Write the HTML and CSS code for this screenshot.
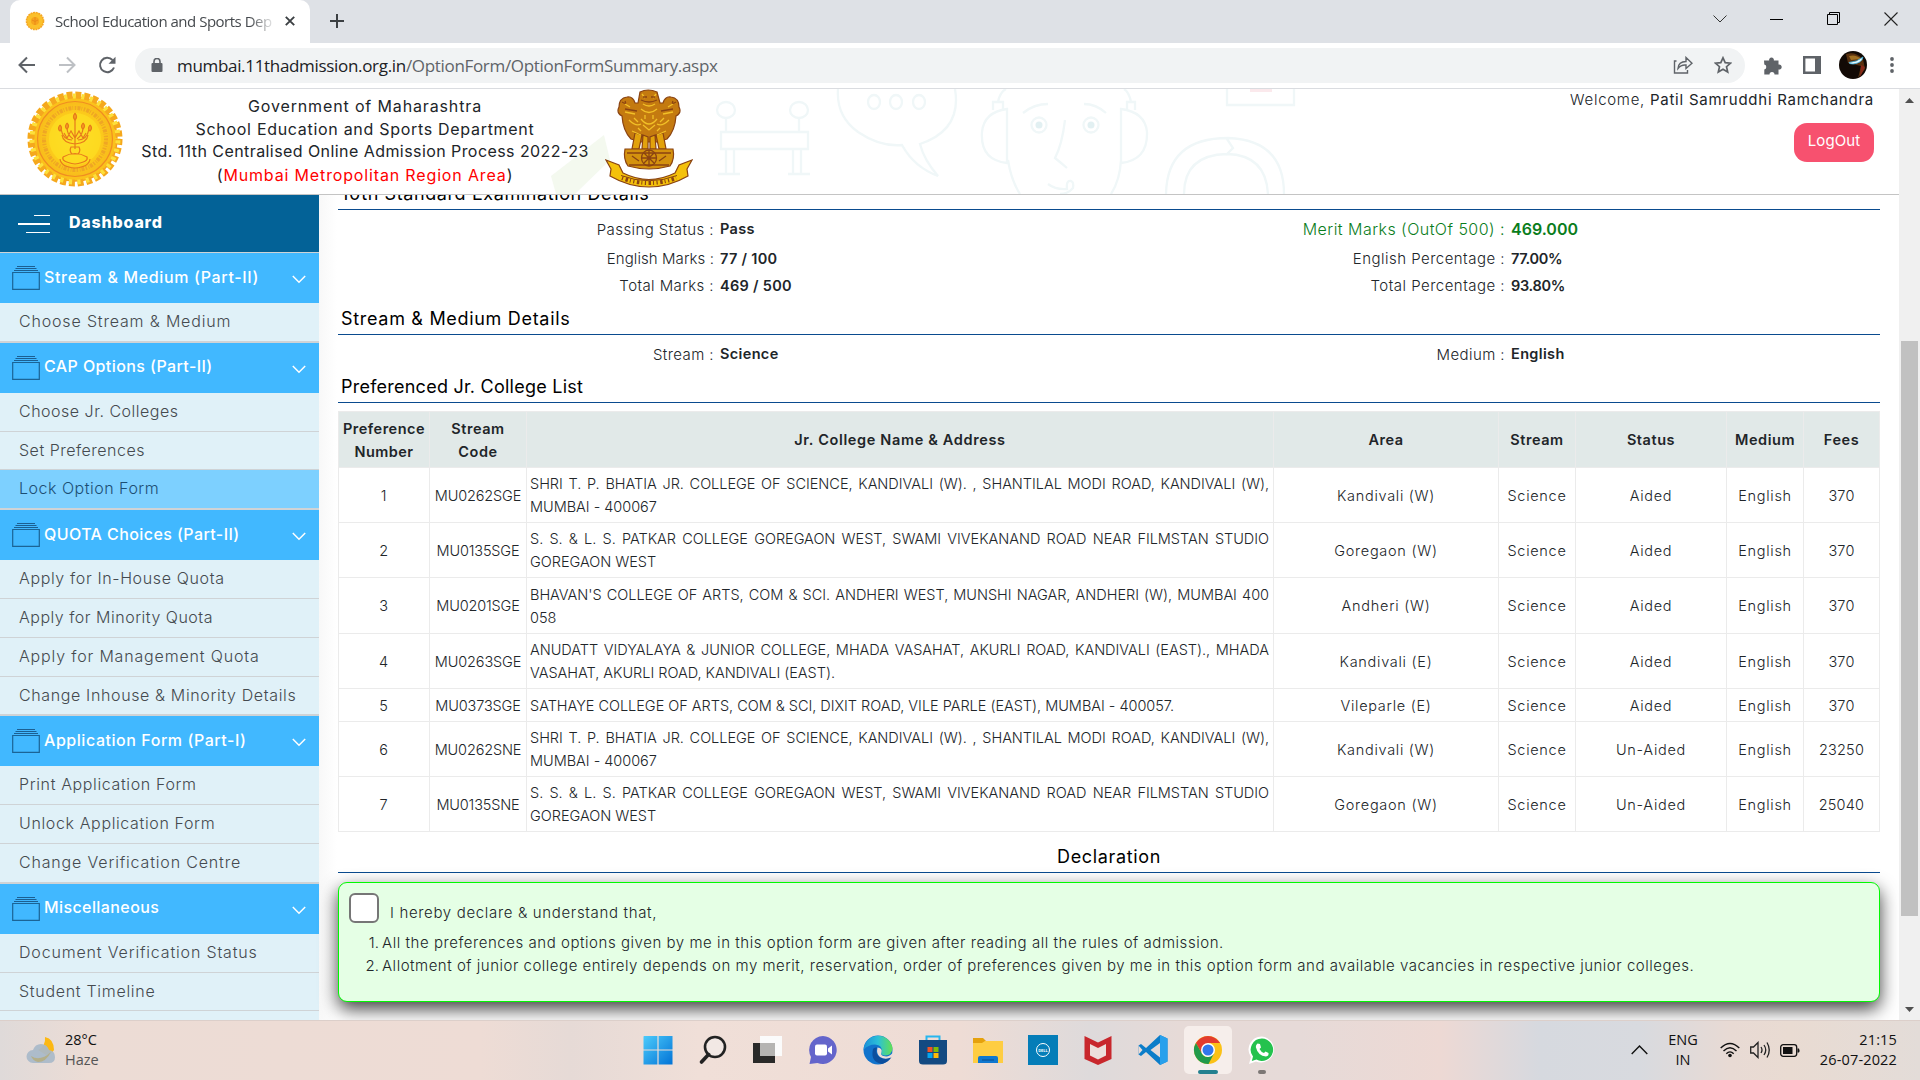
FILE: index.html
```html
<!DOCTYPE html>
<html lang="en">
<head>
<meta charset="utf-8">
<title>School Education and Sports Department</title>
<link rel="stylesheet" href="styles.css">
</head>
<body>
<svg class="defs" width="0" height="0">
  <defs>
    <symbol id="folder" viewBox="0 0 28 25"><path d="M5 1.500H23M3.500 3.500H24.500M2 5.500H26" stroke="#1b5f92" stroke-width="1" fill="none"/><path d="M.7 7.500H27.300V24.300H.7Z" fill="none" stroke="#1b6496" stroke-width="1.200"/></symbol>
    <symbol id="chev" viewBox="0 0 14 9"><path d="M.8 1L7 7.200L13.200 1" fill="none" stroke="#fff" stroke-width="1.500"/></symbol>
    <radialGradient id="gold"><stop offset="0" stop-color="#ffe83a"/><stop offset=".6" stop-color="#fdd01b"/><stop offset="1" stop-color="#f8bb1b"/></radialGradient>
    <symbol id="seal" viewBox="0 0 96 96">
      <circle cx="48" cy="48" r="42" fill="#fbc11b" stroke="#f3a01e" stroke-width="1.500"/>
      <circle cx="48" cy="48" r="44" fill="none" stroke="#f5a81d" stroke-width="7" stroke-dasharray="5.800 2.840"/>
      <circle cx="48" cy="48" r="43" fill="none" stroke="#fde03a" stroke-width="5" stroke-dasharray="3.200 5.440" stroke-dashoffset="-1.300"/>
      <circle cx="48" cy="48" r="37.500" fill="url(#gold)" stroke="#f08c22" stroke-width="1.200"/>
      <circle cx="48" cy="48" r="31" fill="none" stroke="#e9962a" stroke-width="4" stroke-dasharray="1.500 1.200 3 1 .8 1.600" opacity=".65"/>
      <circle cx="48" cy="48" r="26" fill="#fddc22" opacity=".8"/>
      <g fill="none" stroke="#e77a1c" stroke-width="1.200"><path d="M48 24V58M44 56Q42 60 45 63H51Q54 60 52 56ZM36 66Q48 59 60 66Q62 71 48 73Q34 71 36 66M33 68Q34 76 48 77Q62 76 63 68M45 49Q36 49 34 38M51 49Q60 49 62 38M46 48Q40 44 40 36M50 48Q56 44 56 36M35 44Q36 52 48 53Q60 52 61 44M37 42L40 47L44 40L48 47L52 40L56 47L59 42"/><path d="M48 22q-3 4 0 7q3-3 0-7M33 34q-3 4 0 6q3-3 0-6M40 32q-3 4 0 6q3-3 0-6M56 32q-3 4 0 6q3-3 0-6M63 34q-3 4 0 6q3-3 0-6" fill="#f6a01d"/></g>
    </symbol>
  </defs>
</svg>

<div class="tabbar">
  <div class="tab">
    <svg class="fav" viewBox="0 0 20 20"><circle cx="10" cy="10" r="8.500" fill="#fbc02a" stroke="#f5a623" stroke-width="1.600" stroke-dasharray="2 .7"/><circle cx="10" cy="10" r="4" fill="#f7a51d"/><path d="M10 6V14M7 9Q10 12 13 9" stroke="#ea8a1a" fill="none"/></svg>
    <span class="tab-title">School Education and Sports Dep</span>
    <svg class="x" viewBox="0 0 10 10"><path d="M.8.8L9.200 9.200M9.200.8L.8 9.200" stroke="#3c4043" stroke-width="1.900"/></svg>
  </div>
  <svg class="plus" viewBox="0 0 14 14"><path d="M7 0V14M0 7H14" stroke="#3c4043" stroke-width="2"/></svg>
  <div class="winctl">
    <svg width="14" height="8" viewBox="0 0 14 8"><path d="M.5.5L7 7L13.500.5" fill="none" stroke="#333"/></svg>
    <svg width="14" height="14" viewBox="0 0 14 14"><path d="M0 7.500H13" stroke="#000"/></svg>
    <svg width="14" height="14" viewBox="0 0 14 14"><path d="M.5 2.500H10.500V12.500H.5ZM2.500 2.500V.5H12.500V10.500H10.500" fill="none" stroke="#000"/></svg>
    <svg width="14" height="14" viewBox="0 0 14 14"><path d="M.5.5L13.500 13.500M13.500.5L.5 13.500" stroke="#222" stroke-width="1.100"/></svg>
  </div>
</div>

<div class="toolbar">
  <svg class="nav" viewBox="0 0 18 18"><path d="M17 9H2M9 1.500L1.500 9L9 16.500" fill="none" stroke="#5f6368" stroke-width="2"/></svg>
  <svg class="nav" viewBox="0 0 18 18"><path d="M1 9H16M9 1.500L16.500 9L9 16.500" fill="none" stroke="#bdc0c4" stroke-width="2"/></svg>
  <svg class="nav" viewBox="0 0 18 18"><path d="M16 11.500A7.200 7.200 0 1 1 14.500 4" fill="none" stroke="#5f6368" stroke-width="2"/><path d="M17.500.8V7.800H10.500Z" fill="#5f6368"/></svg>
  <div class="omnibox">
    <svg width="12" height="14" viewBox="0 0 12 14"><rect x=".5" y="5" width="11" height="9" rx="1" fill="#5f6368"/><path d="M3 6V3.500a3 3 0 0 1 6 0V6" fill="none" stroke="#5f6368" stroke-width="1.600"/></svg>
    <span class="url"><b>mumbai.11thadmission.org.in</b>/OptionForm/OptionFormSummary.aspx</span>
    <svg class="share" width="20" height="18" viewBox="0 0 20 18"><path d="M3.500 5H1.500V17H14.500V14M5 12.500Q5.500 5.500 13 5.500V1.500L19 7.300L13 12.500V9Q8 8.500 5 12.500Z" fill="none" stroke="#5f6368" stroke-width="1.400"/></svg>
    <svg width="18" height="18" viewBox="0 0 18 18"><path d="M9 1.800L11.200 6.700L16.500 7.200L12.500 10.700L13.700 16L9 13.200L4.300 16L5.500 10.700L1.500 7.200L6.800 6.700Z" fill="none" stroke="#5f6368" stroke-width="1.700"/></svg>
  </div>
  <svg class="ext" width="19" height="19" viewBox="0 0 19 19"><path d="M0 4.500H5.200A2.400 2.400 0 1 1 9.800 4.500H14.500V8.600A2.500 2.500 0 1 1 14.500 13.400V18.500H10.500A2.500 2.500 0 0 0 5.500 18.500H.3V13.500A2.500 2.500 0 0 0 .3 8.600Z" fill="#5f6368"/></svg>
  <svg class="panel" width="18" height="18" viewBox="0 0 18 18"><path d="M1.200 1.200H16.800V16.800H1.200Z" fill="#fff" stroke="#5f6368" stroke-width="2.400"/><rect x="12" y="1" width="5" height="16" fill="#5f6368"/></svg>
  <svg class="avatar" width="28" height="28" viewBox="0 0 28 28"><defs><clipPath id="av"><circle cx="14" cy="14" r="14"/></clipPath></defs><g clip-path="url(#av)"><rect width="28" height="28" fill="#120a05"/><path d="M7 3Q16 0 24 8L26 18L19 27L22 15L9 12Z" fill="#5a3210"/><path d="M10 5Q17 3 22 8L12 9Z" fill="#a17022"/><path d="M22 14L26 16L21 26Z" fill="#8a2818"/><path d="M10 11.500Q18 11 24 6Q23 12 14 13Q10 13 10 11.500Z" fill="#e8fbff" stroke="#3db6e6" stroke-width=".8"/></g></svg>
  <svg class="dots" width="4" height="16" viewBox="0 0 4 16"><g fill="#5f6368"><circle cx="2" cy="2" r="1.900"/><circle cx="2" cy="8" r="1.900"/><circle cx="2" cy="14" r="1.900"/></g></svg>
</div>

<div class="viewport">
  <div class="page">
    <header class="banner">
      <svg class="doodle" width="840" height="105" viewBox="550 89 840 105">
        <path d="M551 176L604 135L610 160L575 194H556Z" fill="#f4f9ef"/>
        <g fill="none" stroke="#f0f7f8" stroke-width="2.300">
          <ellipse cx="726" cy="110" rx="9" ry="8"/><ellipse cx="799" cy="110" rx="9" ry="8"/><path d="M726 118V132M799 118V132M721 132H808V149H721ZM726 149V173M734 149V173M793 149V173M801 149V173M718 174H740M788 174H810"/>
          <path d="M838 89Q836 116 858 132Q880 147 902 145Q914 167 938 176Q924 160 920 144Q962 130 955 89"/><ellipse cx="874" cy="102" rx="6" ry="7"/><ellipse cx="896" cy="102" rx="6" ry="7"/><ellipse cx="919" cy="102" rx="6" ry="7"/>
          <path d="M1007 163Q980 160 982 132Q984 112 1007 109ZM1121 163Q1148 160 1147 132Q1145 112 1121 109ZM993 110V102H1003V110M1127 110V102H1135V110M998 102Q1000 92 1006 89M1131 102Q1129 92 1124 89M1008 160Q1011 180 1020 194M1121 160Q1120 180 1111 194M1023 113Q1034 104 1048 104M1084 104Q1096 104 1106 113M1065 120Q1062 145 1055 158Q1060 162 1067 168M1048 184Q1056 190 1067 189Q1066 180 1071 181Q1074 182 1073 188Q1068 194 1060 194"/>
          <circle cx="1039" cy="125" r="7.500"/><circle cx="1091" cy="125" r="7.500"/>
          <path d="M1166 194Q1167 138 1228 138Q1284 140 1284 194M1184 194Q1184 155 1227 154Q1266 155 1268 194M1227 139L1233 148L1226 155M1227 89V105H1294V89"/>
        </g>
        <g fill="#e2f0f2"><circle cx="1039" cy="125" r="3.500"/><circle cx="1091" cy="125" r="3.500"/></g>
        <rect x="1250" y="89" width="22" height="3" fill="#fbe9ec"/>
      </svg>
      <svg class="seal"><use href="#seal"/></svg>
      <div class="titles">
        <div class="t1">Government of Maharashtra</div>
        <div class="t2">School Education and Sports Department</div>
        <div class="t3">Std. 11th Centralised Online Admission Process 2022-23</div>
        <div class="t4">(<span>Mumbai Metropolitan Region Area</span>)</div>
      </div>
      <svg class="lions" width="88" height="99" viewBox="0 0 88 99">
        <g stroke="#8a4312" stroke-width="1.200" fill="#e2a20c">
          <path d="M35 3Q43-1 52 3L55 14H58Q60 7 66 8Q74 9 74 18Q77 24 71 27Q70 42 62 50L52 53H36L26 50Q18 42 17 27Q11 24 14 18Q14 9 22 8Q28 7 30 14H33Z" fill="#c47a10"/>
          <path d="M30 44L27 60H34L37 46ZM58 44L61 60H54L51 46ZM38 46L37 60H43V48ZM50 46L51 60H45V48Z"/>
          <path d="M20 60H68Q70 70 65 77Q44 83 23 77Q18 70 20 60Z" fill="#d4920e"/>
          <path d="M1 71L14 76L18 84Q44 97 70 84L74 76L87 71L82 80L83 87Q64 98 44 98Q24 98 5 87L6 80Z" fill="#f4c10b"/>
        </g>
        <g fill="none" stroke="#f2c027" stroke-width="1.300"><path d="M37 5L40 9M51 5L48 9M38 15Q44 19 50 15M36 20Q44 27 52 20M20 15L25 18M68 15L63 18M20 23L30 25M68 23L58 25M24 31Q31 38 36 35M64 31Q57 38 52 35M36 30Q44 40 52 30M27 42L36 46M61 42L52 46M38 36L44 41L50 36M29 29L33 33M59 29L55 33M40 26V30M48 26V30M33 39L36 42M55 39L52 42"/></g>
        <g fill="none" stroke="#8a4312" stroke-width="1.300"><ellipse cx="44" cy="69" rx="7.500" ry="8"/><path d="M22 64H66M24 76H64M27 67L34 72M54 72L61 67M44 61V77M37 69H51M39 64L49 74M49 64L39 74M36 11Q44 15 52 11M20 20L32 22M68 20L56 22M17 13Q22 16 20 12M71 13Q66 16 68 12M38 8H42M46 8H50"/></g>
        <path d="M16 86.500Q44 97 72 86.500" fill="none" stroke="#8a4312" stroke-width="1"/>
        <path d="M17 89Q44 99 71 89" fill="none" stroke="#8a4312" stroke-width="4" stroke-dasharray="1.200 2.500 2.500 2 1 2.500"/>
      </svg>
      <div class="user">
        <div class="welcome">Welcome, <b>Patil Samruddhi Ramchandra</b></div>
        <div class="logout">LogOut</div>
      </div>
    </header>

    <div class="cols">
      <nav class="side">
        <div class="dash"><svg width="32" height="20" viewBox="0 0 32 20"><path d="M16 1.500H32M8 18.500H32" stroke="#fff"/><path d="M0 10H32" stroke="#fff" stroke-width="2"/></svg><span>Dashboard</span></div>
        <div class="grp"><div class="hd"><svg class="fo"><use href="#folder"/></svg><span>Stream &amp; Medium (Part-II)</span><svg class="ch"><use href="#chev"/></svg></div>
          <div class="it loose">Choose Stream &amp; Medium</div></div>
        <div class="grp"><div class="hd"><svg class="fo"><use href="#folder"/></svg><span class="tight">CAP Options (Part-II)</span><svg class="ch"><use href="#chev"/></svg></div>
          <div class="it tight">Choose Jr. Colleges</div><div class="it tight">Set Preferences</div><div class="it tight on">Lock Option Form</div></div>
        <div class="grp"><div class="hd"><svg class="fo"><use href="#folder"/></svg><span class="tight">QUOTA Choices (Part-II)</span><svg class="ch"><use href="#chev"/></svg></div>
          <div class="it">Apply for In-House Quota</div><div class="it tight">Apply for Minority Quota</div><div class="it loose">Apply for Management Quota</div><div class="it">Change Inhouse &amp; Minority Details</div></div>
        <div class="grp"><div class="hd"><svg class="fo"><use href="#folder"/></svg><span class="mid">Application Form (Part-I)</span><svg class="ch"><use href="#chev"/></svg></div>
          <div class="it">Print Application Form</div><div class="it">Unlock Application Form</div><div class="it loose">Change Verification Centre</div></div>
        <div class="grp"><div class="hd"><svg class="fo"><use href="#folder"/></svg><span class="tight">Miscellaneous</span><svg class="ch"><use href="#chev"/></svg></div>
          <div class="it loose">Document Verification Status</div><div class="it mid">Student Timeline</div><div class="it"></div></div>
      </nav>

      <main class="main">
        <h2 class="clipped">10th Standard Examination Details</h2>
        <div class="facts exam">
          <span>Passing Status :</span><b>Pass</b><span class="merit">Merit Marks (OutOf 500) :</span><b class="merit">469.000</b>
          <span class="tight">English Marks :</span><b class="sum">77 / 100</b><span class="lab">English Percentage :</span><b class="pct">77.00%</b>
          <span>Total Marks :</span><b class="sum">469 / 500</b><span class="lab">Total Percentage :</span><b class="pct">93.80%</b>
        </div>
        <h2 class="wide">Stream &amp; Medium Details</h2>
        <div class="facts stream"><span>Stream :</span><b>Science</b><span>Medium :</span><b>English</b></div>
        <h2>Preferenced Jr. College List</h2>
        <table>
          <colgroup><col class="c1"><col class="c2"><col class="c3"><col class="c4"><col class="c5"><col class="c6"><col class="c7"><col class="c8"></colgroup>
          <tr class="h56"><th>Preference Number</th><th>Stream Code</th><th>Jr. College Name &amp; Address</th><th>Area</th><th>Stream</th><th>Status</th><th>Medium</th><th>Fees</th></tr>
          <tr class="h55"><td>1</td><td>MU0262SGE</td><td>SHRI T. P. BHATIA JR. COLLEGE OF SCIENCE, KANDIVALI (W). , SHANTILAL MODI ROAD, KANDIVALI (W), MUMBAI - 400067</td><td>Kandivali (W)</td><td>Science</td><td>Aided</td><td>English</td><td>370</td></tr>
          <tr class="h55"><td>2</td><td>MU0135SGE</td><td>S. S. &amp; L. S. PATKAR COLLEGE GOREGAON WEST, SWAMI VIVEKANAND ROAD NEAR FILMSTAN STUDIO GOREGAON WEST</td><td>Goregaon (W)</td><td>Science</td><td>Aided</td><td>English</td><td>370</td></tr>
          <tr class="h56"><td>3</td><td>MU0201SGE</td><td>BHAVAN'S COLLEGE OF ARTS, COM &amp; SCI. ANDHERI WEST, MUNSHI NAGAR, ANDHERI (W), MUMBAI 400 058</td><td>Andheri (W)</td><td>Science</td><td>Aided</td><td>English</td><td>370</td></tr>
          <tr class="h55"><td>4</td><td>MU0263SGE</td><td>ANUDATT VIDYALAYA &amp; JUNIOR COLLEGE, MHADA VASAHAT, AKURLI ROAD, KANDIVALI (EAST)., MHADA VASAHAT, AKURLI ROAD, KANDIVALI (EAST).</td><td>Kandivali (E)</td><td>Science</td><td>Aided</td><td>English</td><td>370</td></tr>
          <tr class="h33"><td>5</td><td>MU0373SGE</td><td>SATHAYE COLLEGE OF ARTS, COM &amp; SCI, DIXIT ROAD, VILE PARLE (EAST), MUMBAI - 400057.</td><td>Vileparle (E)</td><td>Science</td><td>Aided</td><td>English</td><td>370</td></tr>
          <tr class="h55"><td>6</td><td>MU0262SNE</td><td>SHRI T. P. BHATIA JR. COLLEGE OF SCIENCE, KANDIVALI (W). , SHANTILAL MODI ROAD, KANDIVALI (W), MUMBAI - 400067</td><td>Kandivali (W)</td><td>Science</td><td>Un-Aided</td><td>English</td><td>23250</td></tr>
          <tr class="h55"><td>7</td><td>MU0135SNE</td><td>S. S. &amp; L. S. PATKAR COLLEGE GOREGAON WEST, SWAMI VIVEKANAND ROAD NEAR FILMSTAN STUDIO GOREGAON WEST</td><td>Goregaon (W)</td><td>Science</td><td>Un-Aided</td><td>English</td><td>25040</td></tr>
        </table>
        <h2 class="center">Declaration</h2>
        <section class="decl">
          <div class="agree"><i class="box"></i><span>I hereby declare &amp; understand that,</span></div>
          <div class="rule"><em>1.</em><span class="r1">All the preferences and options given by me in this option form are given after reading all the rules of admission.</span></div>
          <div class="rule"><em>2.</em><span>Allotment of junior college entirely depends on my merit, reservation, order of preferences given by me in this option form and available vacancies in respective junior colleges.</span></div>
        </section>
      </main>
    </div>
  </div>
  <div class="scroll">
    <svg width="9" height="5" viewBox="0 0 9 5"><path d="M0 5L4.500 0L9 5Z" fill="#505050"/></svg>
    <div class="thumb"></div>
    <svg class="down" width="9" height="5" viewBox="0 0 9 5"><path d="M0 0L4.500 5L9 0Z" fill="#505050"/></svg>
  </div>
</div>

<footer class="taskbar">
  <div class="weather">
    <svg width="30" height="28" viewBox="0 0 30 28"><path d="M19 1Q28 3 28 14Q26 18 20 19L12 14Q20 10 19 1Z" fill="#fcb813"/><path d="M7 27a6.500 6.500 0 0 1 0-13q2-6 8-6t8 6q6 1 6 7t-6 6Z" fill="#a9b9c9" opacity=".93"/><path d="M5 20Q14 26 25 16Q20 26 12 26Q7 25 5 20Z" fill="#b5ab78" opacity=".8"/></svg>
    <div><div>28°C</div><div class="dim">Haze</div></div>
  </div>
  <div class="apps">
    <svg viewBox="0 0 30 30"><defs><linearGradient id="w" x2="1" y2="1"><stop stop-color="#4ccbfb"/><stop offset="1" stop-color="#0273d6"/></linearGradient></defs><path d="M1 1H14.400V14.400H.5V1.500ZM15.600 1H29.500V14.400H15.600ZM.5 15.600H14.400V29.500H.5ZM15.600 15.600H29.500V29.500H15.600Z" fill="url(#w)"/></svg>
    <svg viewBox="0 0 30 30"><circle cx="17" cy="12" r="10" fill="#f2e8e4" stroke="#222" stroke-width="2.600"/><path d="M10.500 19.500L3.500 27" stroke="#222" stroke-width="3.600" stroke-linecap="round"/></svg>
    <svg viewBox="0 0 30 30"><rect x="0" y="8" width="22" height="20" fill="#2a2a29"/><rect x="7" y="1" width="22" height="20" fill="#fbfbfb"/><rect x="7" y="8" width="15" height="13" fill="#b5b4b2"/></svg>
    <svg viewBox="0 0 30 30"><path d="M15 1A14 14 0 1 1 9.500 28L1.500 29L3 22A14 14 0 0 1 15 1Z" fill="#6465cb"/><rect x="7" y="9.500" width="12" height="11" rx="2" fill="#fff"/><path d="M20 13.500L24 10.500V19.500L20 16.500Z" fill="#fff"/></svg>
    <svg viewBox="0 0 30 30"><defs><linearGradient id="e" x2="1"><stop stop-color="#1a8fd8"/><stop offset=".5" stop-color="#2cc0d8"/><stop offset="1" stop-color="#62e052"/></linearGradient></defs><circle cx="15" cy="15" r="14.500" fill="#1173cc"/><path d="M.6 15A14.500 14.500 0 0 1 29.500 13.500Q29 20 22 20.500Q17 20 18.500 17Q20 10 12 9.500Q5 9.500.6 15Z" fill="url(#e)"/><path d="M10 14Q7 27 19 29Q26 27 28.500 22Q22 25 16.500 22Q12 19 14 12.500Q11 12 10 14Z" fill="#0c4f9e"/><path d="M14.500 12.500Q19.500 13 18.500 17Q17 20 20.500 21Q26 22.500 29.500 18L30 22L28 22.500Q22 25 17 22Q13 19 14.500 12.500Z" fill="#ecdcd6"/></svg>
    <svg viewBox="0 0 30 30"><path d="M8.500 6V1.500H21.500V6" fill="none" stroke="#27b6ef" stroke-width="2"/><path d="M1 5H29V26Q29 29.500 25 29.500H5Q1 29.500 1 26Z" fill="#134a82"/><path d="M9.500 12H14.500V17H9.500Z" fill="#f35325"/><path d="M15.500 12H20.500V17H15.500Z" fill="#81bc06"/><path d="M9.500 18H14.500V23H9.500Z" fill="#05a6f0"/><path d="M15.500 18H20.500V23H15.500Z" fill="#ffba08"/></svg>
    <svg viewBox="0 0 30 30"><path d="M0 3H10L13 6V12H0Z" fill="#e5a10d"/><path d="M0 8H9L12 6H30V28H0Z" fill="#fecd42"/><path d="M5 28V23Q5 21 7 21H23Q25 21 25 23V28Z" fill="#0f78d0"/><path d="M9 25H21" stroke="#0a4d8c"/></svg>
    <svg viewBox="0 0 30 30"><rect width="30" height="30" fill="#047db8"/><circle cx="15" cy="15" r="6.500" fill="none" stroke="#fff"/><text x="15" y="17" text-anchor="middle" class="dell">DELL</text></svg>
    <svg viewBox="0 0 30 30"><path d="M1.500 1L15 7.500L28.500 1V24L15 30L1.500 24Z" fill="#c8272c"/><path d="M7 9L15 13L23 9V20.500L15 24.500L7 20.500Z" fill="#ecdfdb"/></svg>
    <svg viewBox="0 0 30 30"><path d="M22 0L29.500 3.500V26.500L22 30L8 17L3 21L.5 19.500V10.500L3 9L8 13ZM22 8L12.500 15L22 22.500Z" fill="#0b7dc9" fill-rule="evenodd"/><path d="M22 0L29.500 3.500V26.500L22 30Z" fill="#28a0ec"/><path d="M.5 10.500L4.500 15L.5 19.500Z" fill="#ecdcd6"/></svg>
    <div class="active"><svg viewBox="0 0 30 30"><circle cx="15" cy="15" r="14" fill="#fbc116"/><path d="M2.900 8A14 14 0 0 1 27.100 8H15L8.900 18.500Z" fill="#e33b2e"/><path d="M2.900 8L8.900 18.500Q11 22 15 22L21 18.500L15.500 29A14 14 0 0 1 2.900 8Z" fill="#219a4b"/><circle cx="15" cy="15" r="7" fill="#fff"/><circle cx="15" cy="15" r="5.500" fill="#3277ec"/></svg><i></i></div>
    <div class="open"><svg viewBox="0 0 30 30"><path d="M15 1.500A13 13 0 1 1 9 26.500L2 29L4 22A13 13 0 0 1 15 1.500Z" fill="#fff"/><path d="M15 3.500A11.200 11.200 0 1 1 9.500 24.500L4.800 26L6 21.500A11.200 11.200 0 0 1 15 3.500Z" fill="#24c24e"/><path d="M10.500 8.500L13 9L14 12.500L12.500 14Q14 17 17 18L18.500 16.500L21.500 18Q22 21 19 21.500Q11 21 8.800 12Q8.800 9.500 10.500 8.500Z" fill="#fff"/></svg><i></i></div>
  </div>
  <div class="tray">
    <svg width="17" height="10" viewBox="0 0 17 10"><path d="M.7 9L8.500 1L16.300 9" fill="none" stroke="#111" stroke-width="1.400"/></svg>
    <div class="lang"><div>ENG</div><div>IN</div></div>
    <svg class="wifi" width="20" height="16" viewBox="0 0 20 16"><g fill="none" stroke="#111" stroke-width="1.400"><path d="M.7 6Q10-3 19.300 6M3.500 9Q10 2.500 16.500 9M6.300 11.700Q10 8 13.700 11.700"/></g><circle cx="10" cy="13.500" r="1.800" fill="#111"/></svg>
    <svg class="vol" width="20" height="18" viewBox="0 0 20 18"><path d="M.7 6H3.500L8 1.500V16.500L3.500 12H.7ZM11 6Q13 9 11 12M14 4Q17.500 9 14 14M17 1.500Q21.500 9 17 16.500" fill="none" stroke="#222" stroke-width="1.300"/></svg>
    <svg class="bat" width="20" height="13" viewBox="0 0 20 13"><rect x=".7" y=".7" width="16" height="11.600" rx="2.500" fill="none" stroke="#111" stroke-width="1.300"/><rect x="3" y="3" width="9.500" height="7" fill="#111"/><path d="M17.500 4.500H19Q20 6.500 19 8.500H17.500Z" fill="#111"/></svg>
    <div class="clock"><div>21:15</div><div>26-07-2022</div></div>
  </div>
</footer>
</body>
</html>
```
FILE: styles.css
```css
* { box-sizing: border-box; }
body { margin: 0; width: 1920px; height: 1080px; overflow: hidden; background: #fff; font-family: Inter, "Open Sans", sans-serif; color: #212529; display: flex; flex-direction: column; }
svg { display: block; flex: none; }
.defs { position: absolute; }

/* browser chrome */
.tabbar { height: 43px; flex: none; background: #dee1e6; display: flex; align-items: center; padding-left: 10px; font-family: "Open Sans", sans-serif; }
.tab { width: 300px; height: 43px; background: #fff; border-radius: 10px 10px 0 0; display: flex; align-items: center; padding: 0 15px 2px; }
.fav { width: 20px; height: 20px; }
.tab-title { margin-left: 10px; width: 221px; overflow: hidden; white-space: nowrap; font-size: 15px; letter-spacing: -.49px; color: #45494d; -webkit-mask-image: linear-gradient(90deg, #000 88%, transparent 100%); mask-image: linear-gradient(90deg, #000 88%, transparent 100%); }
.x { width: 10px; height: 10px; margin-left: 9px; }
.plus { width: 14px; height: 14px; margin: -1px 0 0 20px; }
.winctl { margin-left: auto; display: flex; align-items: center; gap: 43px; padding-right: 22px; padding-bottom: 6px; }
.toolbar { height: 46px; flex: none; display: flex; align-items: center; background: #fff; border-bottom: 1px solid #dadce0; padding: 0 0 1px 18px; }
.nav { width: 18px; height: 18px; margin-right: 22px; }
.omnibox { width: 1610px; height: 35px; margin-left: -3px; border-radius: 18px; background: #f1f3f4; display: flex; align-items: center; padding: 0 13px 0 16px; font-family: "Open Sans", sans-serif; }
.url { margin-left: 14px; font-size: 17px; letter-spacing: -.32px; color: #5f6368; }
.url b { font-weight: 400; color: #202124; }
.share { margin-left: auto; margin-right: 21px; }
.ext { margin-left: 19px; }
.panel { margin-left: 20px; }
.avatar { margin-left: 18px; }
.dots { margin-left: 23px; }

/* page frame */
.viewport { height: 931px; flex: none; display: flex; }
.page { width: 1899px; height: 931px; overflow: hidden; }
.scroll { width: 21px; background: #f0f0f0; display: flex; flex-direction: column; align-items: center; padding: 9px 0 8px; }
.thumb { width: 17px; height: 575px; margin-top: 238px; background: #c1c1c1; }
.down { margin-top: auto; }

.banner { height: 106px; border-bottom: 1px solid #c4c4c4; display: flex; position: relative; }
.doodle { position: absolute; left: 550px; top: 0; }
.seal { width: 96px; height: 96px; margin: 2px 1px 0 27px; position: relative; }
.titles { width: 470px; margin-left: 6px; padding-top: 6px; text-align: center; white-space: nowrap; position: relative; font-size: 16px; line-height: 22.500px; }
.t1 { letter-spacing: .86px; }
.t2 { letter-spacing: .7px; line-height: 22px; }
.t3 { letter-spacing: .43px; line-height: 23px; }
.t4 { letter-spacing: .85px; line-height: 25px; }
.t4 span { color: #f00; }
.lions { margin-left: 5px; position: relative; }
.user { margin-left: auto; margin-right: 25px; display: flex; flex-direction: column; align-items: flex-end; }
.welcome { font-size: 15px; font-weight: 300; line-height: 22px; letter-spacing: .71px; }
.welcome b { font-weight: 400; letter-spacing: .76px; }
.logout { width: 80px; height: 39px; margin-top: 12px; border-radius: 13px; background: #f7516f; color: #fff; font-size: 15px; line-height: 36px; text-align: center; letter-spacing: .1px; }

.cols { display: flex; height: 825px; overflow: hidden; }
.side { width: 319px; height: 825px; overflow: hidden; flex: none; background: #e0f1f8; }
.dash { height: 57px; background: #036297; color: #fff; display: flex; align-items: center; padding: 1px 0 0 18px; font-size: 16px; font-weight: 800; letter-spacing: .8px; }
.dash span { margin: -5px 0 0 19px; }
.grp { border-top: 1px solid #cfd3d6; }
.hd { height: 50px; background: #41b8ff; color: #fff; display: flex; align-items: center; padding: 0 13px 0 12px; font-size: 16px; font-weight: 500; letter-spacing: .66px; }
.hd span { margin: -3px 0 0 4px; }
.hd span.tight { letter-spacing: .41px; }
.hd span.mid { letter-spacing: .55px; }
.fo { width: 28px; height: 25px; margin-top: -1px; }
.ch { width: 14px; height: 9px; margin: 3px 0 0 auto; }
.it { height: 38.800px; border-bottom: 1px solid #cfd3d6; padding-left: 19px; line-height: 36px; font-size: 16px; font-weight: 300; letter-spacing: .63px; color: #454a4f; white-space: nowrap; }
.it.tight { letter-spacing: .5px; }
.it.mid { letter-spacing: .7px; }
.it.loose { letter-spacing: .83px; }
.it.on { background: #7dd0ff; color: #1c4e74; }

/* content column */
.main { width: 1580px; padding: 0 19px; background: linear-gradient(90deg, #f8f8f8, #fff 18px); }
h2 { margin: 0; height: 33px; border-bottom: 1px solid #0a4b8f; padding-left: 3px; font-size: 18px; line-height: 33px; font-weight: 400; letter-spacing: .24px; color: #000; }
h2.clipped { margin-top: -18px; letter-spacing: .6px; }
h2.wide { letter-spacing: .69px; }
h2.center { margin-top: 8px; text-align: center; padding: 0; letter-spacing: .65px; }
.facts { display: grid; grid-template-columns: 376px 383px 396px 1fr; column-gap: 6px; align-items: center; font-size: 15px; font-weight: 300; letter-spacing: .42px; }
.facts span { text-align: right; }
.facts span.tight { letter-spacing: .08px; }
.facts span.lab { letter-spacing: .48px; }
.facts b { font-weight: 600; font-size: 14.500px; letter-spacing: .35px; padding-bottom: 1px; }
.facts b.sum { letter-spacing: .3px; }
.facts b.pct { letter-spacing: -.3px; }
.exam { height: 92px; padding-top: 4px; grid-template-rows: 30px 29px 25px; }
.stream { height: 35px; padding-top: 3px; }
.facts .merit { color: #0a7d1c; font-size: 16px; letter-spacing: .46px; }
.facts b.merit { letter-spacing: 0; }
table { width: 1541px; margin-top: 8px; border-collapse: collapse; table-layout: fixed; font-size: 14.500px; line-height: 23px; }
th, td { border: 1px solid #ebebeb; padding: 0 4px; text-align: center; vertical-align: middle; }
th { background: #e1e9e8; font-weight: 600; letter-spacing: .55px; }
th:nth-child(3) { letter-spacing: .65px; }
th:nth-child(7) { padding: 0; }
td { font-weight: 300; letter-spacing: .72px; }
th:first-child { padding: 0; letter-spacing: .48px; }
td:nth-child(2) { padding: 0; letter-spacing: -.15px; }
td:nth-child(3) { text-align: justify; letter-spacing: -.03px; padding: 0 4px 0 3px; }
td:last-child { letter-spacing: .2px; }
.c1 { width: 91px; } .c2 { width: 97px; } .c3 { width: 747px; } .c4 { width: 225px; }
.c5 { width: 77px; } .c6 { width: 151px; } .c7 { width: 77px; } .c8 { width: 76px; }
.h56 { height: 56px; } .h55 { height: 55px; } .h33 { height: 33px; }
.decl { height: 120px; margin-top: 9px; border: 1.500px solid #00fa00; border-radius: 9px; background: #e5ffe5; box-shadow: 0 7px 18px rgba(0, 0, 0, .75); padding: 10px 10px; font-size: 15px; font-weight: 300; }
.agree { display: flex; height: 38px; align-items: flex-start; letter-spacing: .66px; }
.box { width: 30px; height: 30px; border: 2.500px solid #767676; border-radius: 6px; background: #fff; margin-right: 11px; }
.agree span { line-height: 39px; }
.rule { display: flex; line-height: 23px; letter-spacing: .515px; white-space: nowrap; }
.r1 { letter-spacing: .545px; }
.rule em { font-style: normal; width: 30px; text-align: right; margin-right: 3px; letter-spacing: 0; }

/* taskbar */
.taskbar { height: 60px; flex: none; border-top: 1px solid #dccfca; display: flex; align-items: center; padding-bottom: 1px; font-family: "Open Sans", sans-serif; font-size: 14.500px; line-height: 20px; color: #111; background: linear-gradient(90deg, #dfdad9 0, #ecdcd5 90px, #eedcd5 480px, #e6dad6 570px, #f0dfd8 700px, #eedcd5 960px, #dedadb 1090px, #e6dad7 1180px, #e6dad8 1300px, #edd9d4 1440px, #d6d9df 1540px, #d8dadf 1640px, #e8dad4 1730px, #e9dbd2 1790px, #e3dcd8 1920px); }
.weather { width: 617px; display: flex; align-items: center; gap: 9px; padding-left: 26px; }
.weather .dim { color: #555; }
.apps { display: flex; align-items: center; width: 700px; padding-left: 25.500px; gap: 25px; }
.apps svg { width: 30px; height: 30px; }
.active { width: 48px; height: 48px; margin: 0 -9.500px 0 -9px; background: #f6eeeb; border-radius: 5px; display: flex; flex-direction: column; align-items: center; padding-top: 9px; gap: 5px; }
.active i { width: 20px; height: 4px; border-radius: 2px; background: #23808f; }
.open { display: flex; flex-direction: column; align-items: center; height: 48px; padding-top: 9px; gap: 5px; }
.open i { width: 8px; height: 4px; border-radius: 2px; background: #7d7775; }
.dell { font: 700 4px "Open Sans", sans-serif; fill: #fff; }
.tray { margin-left: auto; display: flex; align-items: center; padding-right: 23px; }
.lang { width: 40px; text-align: center; margin-left: 15px; }
.wifi { margin-left: 17px; }
.vol { margin-left: 10px; }
.bat { margin-left: 10px; }
.clock { width: 97px; text-align: right; letter-spacing: .15px; }
```
